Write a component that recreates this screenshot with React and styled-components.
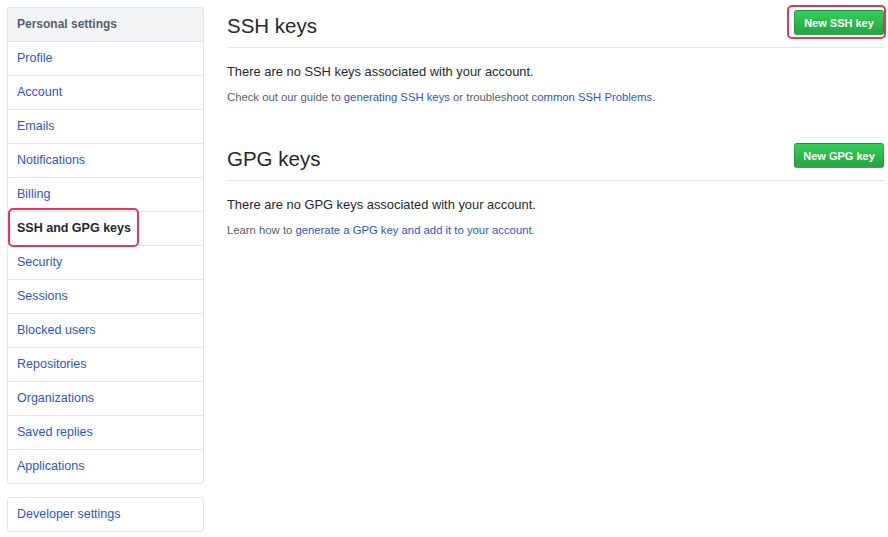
import React from "react";
import styled, { createGlobalStyle } from "styled-components";

const GlobalStyle = createGlobalStyle`
  html, body {
    margin: 0;
    padding: 0;
    background: #fff;
  }
  body {
    font-family: "Liberation Sans", Arial, sans-serif;
    color: #24292e;
  }
`;

const LINK = "#2d55d3";

const Page = styled.div`
  display: flex;
  align-items: flex-start;
  gap: 23px;
  padding: 7px 4px 7px 7px;
  width: 888px;
  box-sizing: border-box;
`;

const Sidebar = styled.nav`
  width: 197px;
  flex: 0 0 197px;
  display: flex;
  flex-direction: column;
  gap: 13px;
`;

const Menu = styled.div`
  border: 1px solid #e1e4e8;
  border-radius: 3px;
  background: #fff;
`;

const MenuHeader = styled.div`
  height: 33px;
  line-height: 33px;
  padding: 0 9px;
  background: #f3f4f6;
  border-bottom: 1px solid #e1e4e8;
  font-size: 12px;
  font-weight: bold;
  color: #586069;
  border-radius: 3px 3px 0 0;
`;

const MenuItem = styled.a`
  position: relative;
  display: block;
  height: 33px;
  line-height: 33px;
  padding: 0 9px;
  font-size: 12.5px;
  text-decoration: none;
  color: ${(p) => (p.$active ? "#24292e" : LINK)};
  font-weight: ${(p) => (p.$active ? "bold" : "normal")};
  border-bottom: ${(p) => (p.$last ? "none" : "1px solid #e1e4e8")};
`;

const Highlight = styled.span`
  position: absolute;
  left: ${(p) => p.$left}px;
  top: ${(p) => p.$top}px;
  width: ${(p) => p.$width}px;
  height: ${(p) => p.$height}px;
  border: 2px solid #e5365f;
  border-radius: 5px;
  box-sizing: border-box;
  pointer-events: none;
`;

const Main = styled.main`
  flex: 1;
  display: flex;
  flex-direction: column;
`;

const Section = styled.section`
  margin-bottom: ${(p) => p.$gap || 0}px;
`;

const SubHead = styled.div`
  display: flex;
  justify-content: space-between;
  align-items: flex-start;
  padding: 5px 0 8px;
  border-bottom: 1px solid #e1e4e8;
`;

const Title = styled.h2`
  margin: 0;
  font-size: 20.5px;
  line-height: 27px;
  font-weight: normal;
  color: #24292e;
`;

const ButtonWrap = styled.div`
  position: relative;
  margin-top: -2px;
`;

const GreenButton = styled.button`
  display: block;
  width: 90px;
  height: 25px;
  padding: 0;
  border: 1px solid rgba(27, 31, 35, 0.2);
  border-radius: 3px;
  background: linear-gradient(#34d058, #28a745 90%);
  color: #fff;
  font-family: "Liberation Sans", Arial, sans-serif;
  font-size: 11px;
  font-weight: bold;
  cursor: pointer;
`;

const Lead = styled.p`
  margin: 14px 0 0;
  font-size: 12.9px;
  line-height: 20px;
  color: #24292e;
`;

const Note = styled.p`
  margin: 6px 0 0;
  font-size: 11.3px;
  line-height: 18px;
  color: #586069;
  a {
    color: ${LINK};
    text-decoration: none;
  }
`;

const items = [
  "Profile",
  "Account",
  "Emails",
  "Notifications",
  "Billing",
  "SSH and GPG keys",
  "Security",
  "Sessions",
  "Blocked users",
  "Repositories",
  "Organizations",
  "Saved replies",
  "Applications",
];

const App = () => {
  return (
    <>
      <GlobalStyle />
      <Page>
        <Sidebar>
          <Menu>
            <MenuHeader>Personal settings</MenuHeader>
            {items.map((item, idx) => {
              const active = item === "SSH and GPG keys";
              return (
                <MenuItem key={item} href="#" $active={active} $last={idx === items.length - 1}>
                  {item}
                  {active && <Highlight $left={0} $top={-4} $width={131} $height={39} />}
                </MenuItem>
              );
            })}
          </Menu>
          <Menu>
            <MenuItem href="#" $last>
              Developer settings
            </MenuItem>
          </Menu>
        </Sidebar>
        <Main>
          <Section $gap={34}>
            <SubHead>
              <Title>SSH keys</Title>
              <ButtonWrap>
                <GreenButton>New SSH key</GreenButton>
                <Highlight $left={-7} $top={-5} $width={99} $height={34} />
              </ButtonWrap>
            </SubHead>
            <Lead>There are no SSH keys associated with your account.</Lead>
            <Note>
              Check out our guide to <a href="#">generating SSH keys</a> or troubleshoot{" "}
              <a href="#">common SSH Problems</a>.
            </Note>
          </Section>
          <Section>
            <SubHead>
              <Title>GPG keys</Title>
              <ButtonWrap>
                <GreenButton>New GPG key</GreenButton>
              </ButtonWrap>
            </SubHead>
            <Lead>There are no GPG keys associated with your account.</Lead>
            <Note>
              Learn how to <a href="#">generate a GPG key and add it to your account</a>.
            </Note>
          </Section>
        </Main>
      </Page>
    </>
  );
};

export default App;
